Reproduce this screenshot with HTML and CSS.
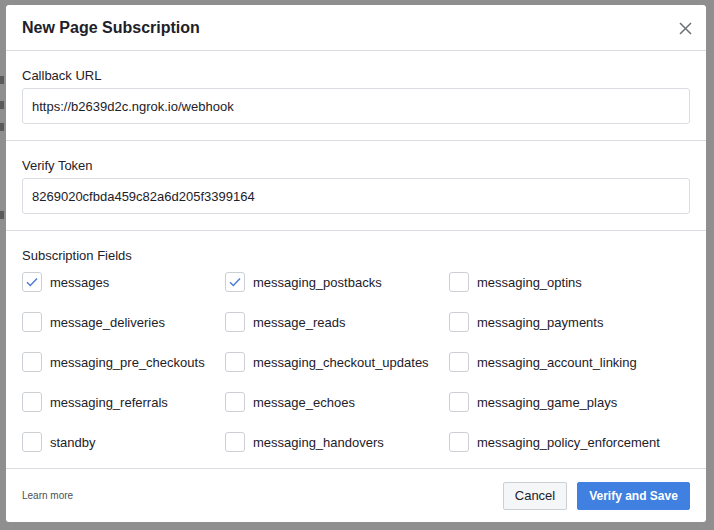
FILE: index.html
```html
<!DOCTYPE html>
<html>
<head>
<meta charset="utf-8">
<link rel="stylesheet" href="styles.css">
</head>
<body>
<div class="backdrop">
  <div class="bg-frag">
    <span class="b1"></span><span class="b2"></span><span class="b3"></span><span class="b4"></span>
  </div>
  <div class="dialog">
    <div class="header">
      <div class="title">New Page Subscription</div>
      <svg class="close" width="13" height="13" viewBox="0 0 13 13"><path d="M1 1L12 12M12 1L1 12" stroke="#6b6f76" stroke-width="1.5" fill="none"/></svg>
    </div>
    <div class="section">
      <div class="label">Callback URL</div>
      <div class="input">https://b2639d2c.ngrok.io/webhook</div>
    </div>
    <div class="section">
      <div class="label">Verify Token</div>
      <div class="input">8269020cfbda459c82a6d205f3399164</div>
    </div>
    <div class="section fields">
      <div class="label">Subscription Fields</div>
      <div class="grid">
        <div class="item"><span class="box checked"><svg width="12" height="10" viewBox="0 0 12 10"><path d="M1 5.2L4.3 8.4L11 1.5" stroke="#4a7bd6" stroke-width="1.4" fill="none"/></svg></span>messages</div>
        <div class="item"><span class="box checked"><svg width="12" height="10" viewBox="0 0 12 10"><path d="M1 5.2L4.3 8.4L11 1.5" stroke="#4a7bd6" stroke-width="1.4" fill="none"/></svg></span>messaging_postbacks</div>
        <div class="item"><span class="box"></span>messaging_optins</div>
        <div class="item"><span class="box"></span>message_deliveries</div>
        <div class="item"><span class="box"></span>message_reads</div>
        <div class="item"><span class="box"></span>messaging_payments</div>
        <div class="item"><span class="box"></span>messaging_pre_checkouts</div>
        <div class="item"><span class="box"></span>messaging_checkout_updates</div>
        <div class="item"><span class="box"></span>messaging_account_linking</div>
        <div class="item"><span class="box"></span>messaging_referrals</div>
        <div class="item"><span class="box"></span>message_echoes</div>
        <div class="item"><span class="box"></span>messaging_game_plays</div>
        <div class="item"><span class="box"></span>standby</div>
        <div class="item"><span class="box"></span>messaging_handovers</div>
        <div class="item"><span class="box"></span>messaging_policy_enforcement</div>
      </div>
    </div>
    <div class="footer">
      <a class="learn">Learn more</a>
      <div class="buttons">
        <button class="btn cancel">Cancel</button>
        <button class="btn primary">Verify and Save</button>
      </div>
    </div>
  </div>
</div>
</body>
</html>
```

FILE: styles.css
```css
* { box-sizing: border-box; }
html, body { margin: 0; padding: 0; }
body {
  width: 714px;
  height: 530px;
  background: #8f8f8f;
  font-family: "Liberation Sans", Arial, sans-serif;
  color: #1d2129;
  overflow: hidden;
}
.backdrop {
  position: relative;
  width: 714px;
  height: 530px;
  padding: 5px 0 0 6px;
}
.bg-frag {
  position: absolute;
  left: 0;
  top: 0;
  width: 6px;
  height: 530px;
}
.bg-frag span {
  position: absolute;
  left: 0;
  width: 4px;
  height: 8px;
  background: #5a5a5a;
}
.b1 { top: 76px; }
.b2 { top: 101px; }
.b3 { top: 123px; }
.b4 { top: 211px; }
.dialog {
  position: relative;
  width: 700px;
  height: 517px;
  background: #fff;
  border-radius: 3px;
  display: flex;
  flex-direction: column;
}
.header {
  height: 46px;
  padding: 0 14px 0 16px;
  display: flex;
  align-items: center;
  justify-content: space-between;
  border-bottom: 1px solid #dadde1;
}
.title {
  font-size: 16px;
  font-weight: bold;
  color: #1d2129;
  padding-top: 1px;
}
.close { display: block; margin-top: 1px; }
.section {
  padding: 17px 16px 16px;
  border-bottom: 1px solid #dadde1;
}
.label {
  font-size: 13px;
  line-height: 16px;
  color: #1d2129;
  margin-bottom: 4px;
}
.input {
  height: 36px;
  border: 1px solid #dadde1;
  border-radius: 3px;
  padding: 0 9px;
  font-size: 13px;
  line-height: 35px;
  color: #1d2129;
}
.fields { padding-bottom: 6px; }
.fields .label { margin-bottom: -2px; }
.grid {
  display: grid;
  grid-template-columns: 203px 224px 1fr;
}
.item {
  height: 40px;
  display: flex;
  align-items: center;
  font-size: 13px;
  color: #1d2129;
}
.box {
  width: 20px;
  height: 20px;
  border: 1px solid #ccd0d5;
  border-radius: 3px;
  margin-right: 8px;
  display: flex;
  align-items: center;
  justify-content: center;
  flex: none;
}
.footer {
  flex: 1;
  padding: 0 16px;
  display: flex;
  align-items: center;
  justify-content: space-between;
}
.learn {
  font-size: 10px;
  color: #4b4f56;
}
.buttons { display: flex; gap: 10px; }
.btn {
  height: 28px;
  border-radius: 2px;
  font-family: "Liberation Sans", Arial, sans-serif;
  font-size: 12px;
  font-weight: bold;
  padding: 0;
  white-space: nowrap;
  cursor: pointer;
}
.cancel {
  width: 64px;
  background: #f5f6f7;
  border: 1px solid #ccd0d5;
  color: #1d2129;
  font-weight: normal;
  font-size: 13px;
}
.primary {
  width: 113px;
  background: #4080e0;
  border: 1px solid #4080e0;
  color: #fff;
}
```
